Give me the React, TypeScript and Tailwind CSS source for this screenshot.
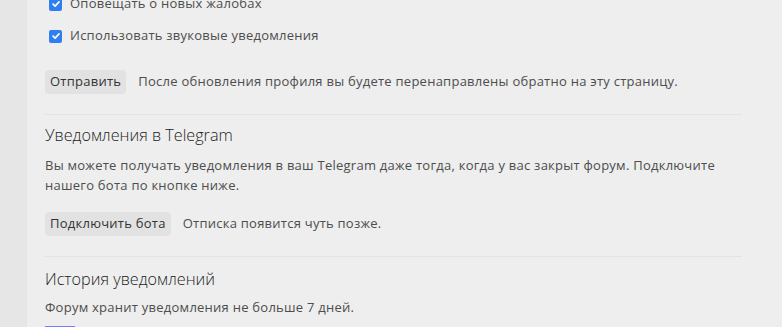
import React from "react";

function Check({ label }: { label: string }) {
  return (
    <label className="flex h-5 items-center gap-[8px] pl-[4px]">
      <span className="flex h-[13px] w-[13px] items-center justify-center rounded-[2px] bg-[#2f7ff3]">
        <svg viewBox="0 0 12 12" className="h-[10px] w-[10px]">
          <path d="M2.5 6.2 L5 8.6 L9.6 3.4" fill="none" stroke="#ffffff" strokeWidth="2" strokeLinecap="round" strokeLinejoin="round" />
        </svg>
      </span>
      <span>{label}</span>
    </label>
  );
}

function Btn({ children }: { children: React.ReactNode }) {
  return (
    <button className="h-6 rounded-[4px] bg-[#e2e2e2] px-[5px] text-[#333333]">{children}</button>
  );
}

export default function App() {
  return (
    <div
      className="flex h-[327px] w-full overflow-hidden bg-[#eeeeee] text-[13px] tracking-[0.25px] text-[#4d4d4d]"
      style={{ fontFamily: '"Open Sans", "Noto Sans", sans-serif' }}
    >
      <div className="w-[27px] shrink-0 bg-[#e6e6e6]" />
      <div className="box-content flex w-[697px] flex-col pl-[18px]">
        <div className="-mt-[6px] flex flex-col gap-3">
          <Check label="Оповещать о новых жалобах" />
          <Check label="Использовать звуковые уведомления" />
        </div>
        <div className="mt-[24px] flex items-center gap-3 border-b border-[#e3e3e3] pb-5">
          <Btn>Отправить</Btn>
          <span>После обновления профиля вы будете перенаправлены обратно на эту страницу.</span>
        </div>
        <h2 className="mt-[8px] text-[16.2px] leading-6 font-light tracking-normal text-[#222222]">
          Уведомления в Telegram
        </h2>
        <p className="mt-[8px] leading-5">
          Вы можете получать уведомления в ваш Telegram даже тогда, когда у вас закрыт форум. Подключите нашего бота по кнопке ниже.
        </p>
        <div className="mt-[17px] flex items-center gap-3 border-b border-[#e3e3e3] pb-5">
          <Btn>Подключить бота</Btn>
          <span>Отписка появится чуть позже.</span>
        </div>
        <h2 className="mt-[10px] text-[16.2px] leading-6 font-light tracking-normal text-[#222222]">
          История уведомлений
        </h2>
        <p className="mt-[6px] leading-5">Форум хранит уведомления не больше 7 дней.</p>
        <div className="mt-[9px] h-[3px] w-[30px] bg-[#7b7bf2]" />
      </div>
    </div>
  );
}
